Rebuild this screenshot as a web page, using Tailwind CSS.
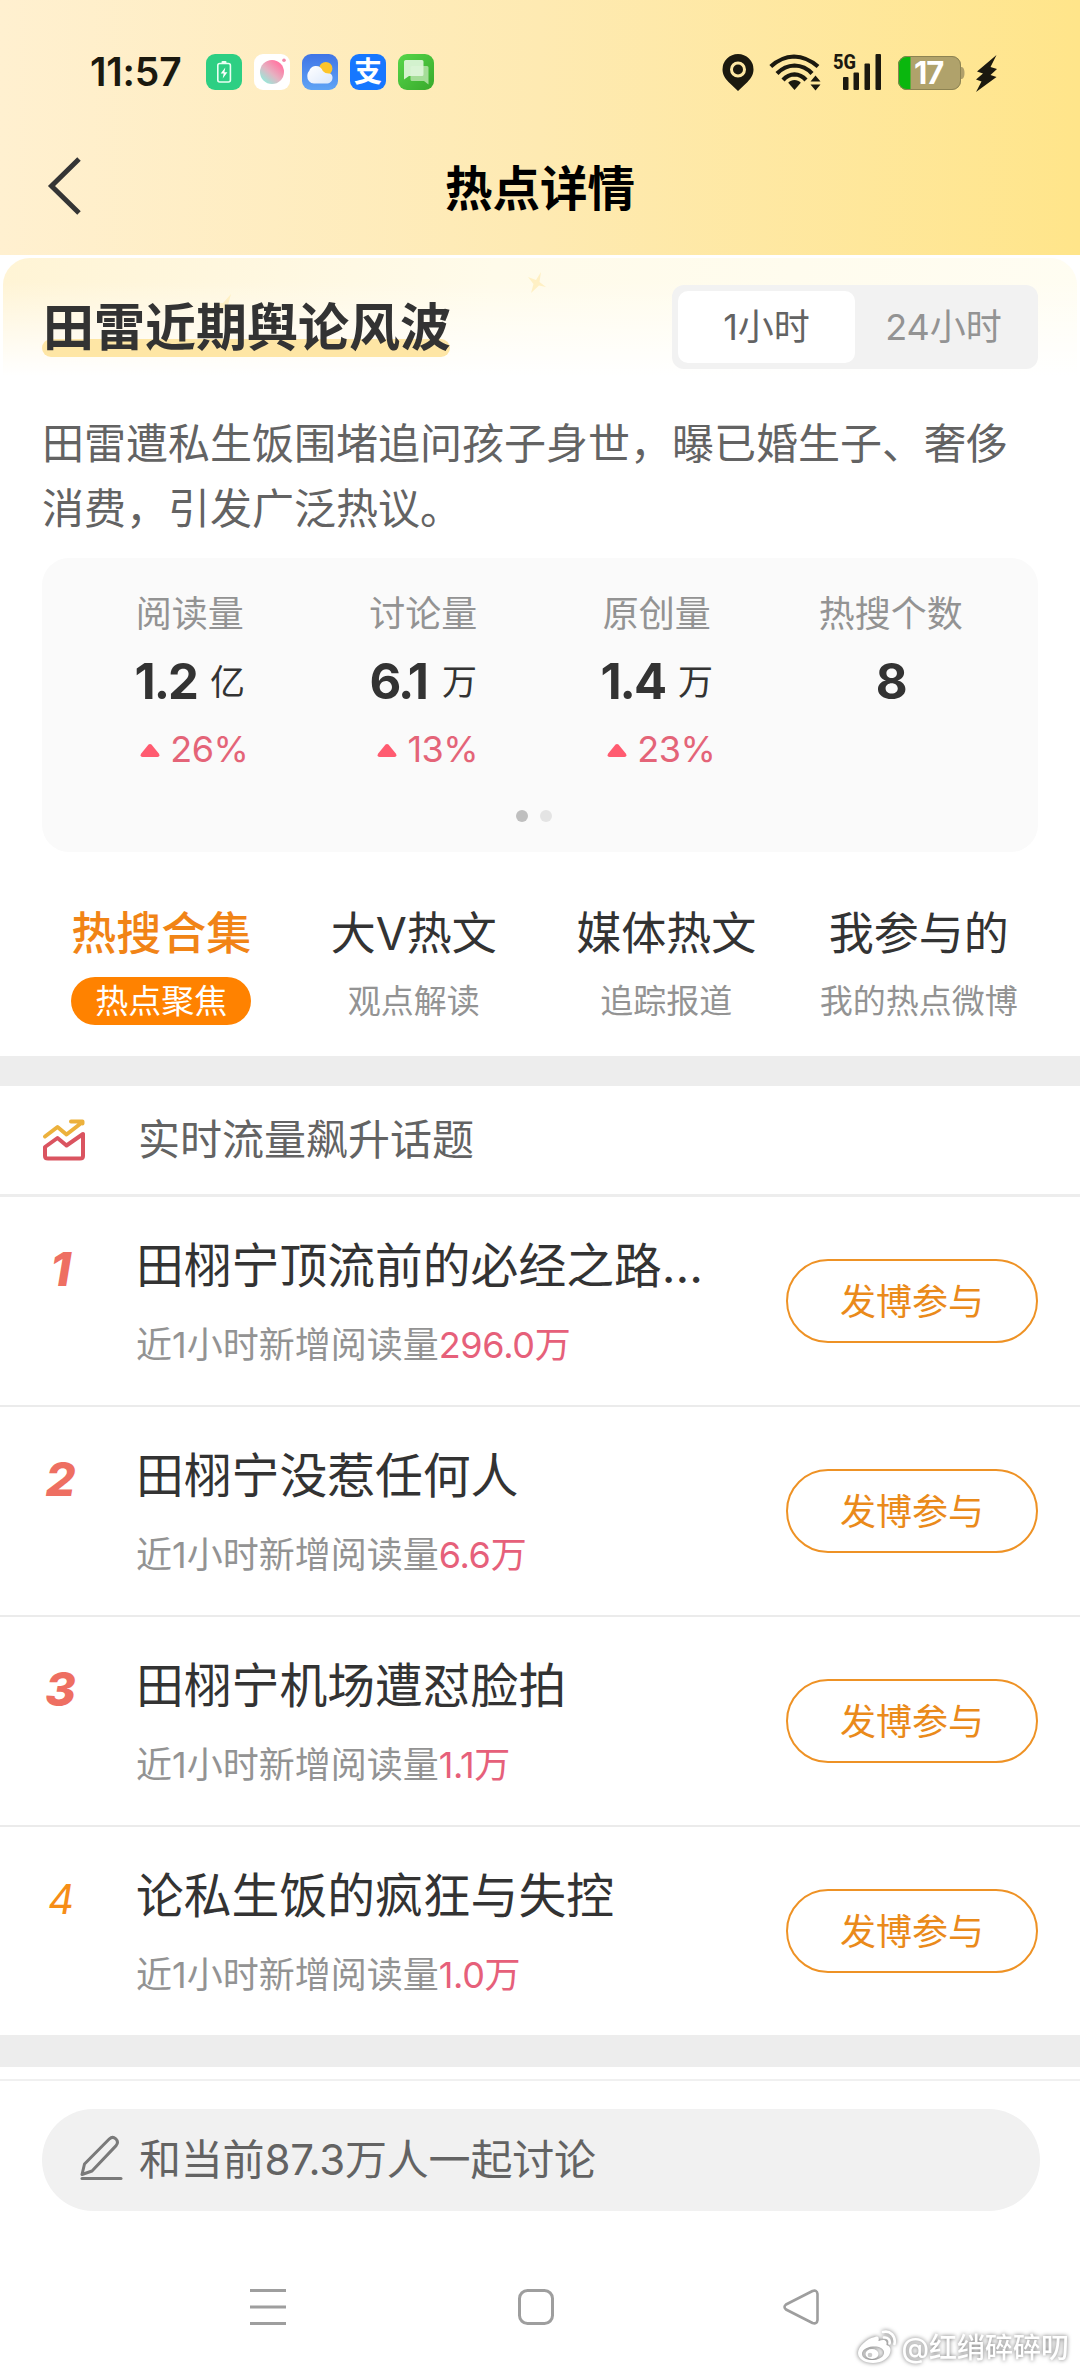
<!DOCTYPE html>
<html lang="zh-CN">
<head>
<meta charset="utf-8">
<meta name="viewport" content="width=1080">
<title>热点详情</title>
<script src="https://cdn.jsdelivr.net/npm/@tailwindcss/browser@4"></script>
</head>
<body class="bg-white">
<div class="relative w-[1080px] h-[2373px] overflow-hidden bg-white flex flex-col font-['Inter','Noto_Sans_CJK_SC',sans-serif] text-[#333]">

  <!-- Status bar and title bar -->
  <header class="h-[255px] shrink-0 bg-gradient-to-r from-[#fff0d0] via-[#feeab2] to-[#ffe58a]">
    <div class="h-[144px] flex items-center justify-between pl-[90px] pr-[83px]">
      <div class="flex items-center text-[#1b190f]">
        <span class="w-[116px] text-[39px] leading-[40px] font-semibold tracking-[-0.2px] whitespace-nowrap">11:57</span>
        <div class="flex gap-3">
          <svg class="size-9" viewBox="0 0 36 36"><rect width="36" height="36" rx="9" fill="#2dcf83"/><rect x="11.8" y="9.5" width="12.6" height="18.5" rx="2" fill="none" stroke="#e9fff3" stroke-width="1.6"/><rect x="15.5" y="7" width="5" height="2.4" rx="1" fill="#e9fff3"/><path d="M19.3 13.5l-4.6 6h3l-1 5 4.7-6.3h-3z" fill="#fff"/></svg>
          <svg class="size-9" viewBox="0 0 36 36"><defs><linearGradient id="ball" x1=".85" y1=".1" x2=".15" y2=".9"><stop offset=".1" stop-color="#ff7ba5"/><stop offset=".55" stop-color="#e5b3c2"/><stop offset="1" stop-color="#96e9da"/></linearGradient></defs><rect width="36" height="36" rx="9" fill="#fff"/><circle cx="18" cy="18" r="12" fill="url(#ball)"/><circle cx="30" cy="6.3" r="1.8" fill="#f38aa8"/></svg>
          <svg class="size-9" viewBox="0 0 36 36"><defs><linearGradient id="sky" x1="0" y1="0" x2="0" y2="1"><stop offset="0" stop-color="#3f74e6"/><stop offset="1" stop-color="#5fa4f5"/></linearGradient><linearGradient id="cloud" x1="0" y1="0" x2="1" y2="1"><stop offset="0" stop-color="#fff"/><stop offset="1" stop-color="#dbe8fb"/></linearGradient></defs><rect width="36" height="36" rx="9" fill="url(#sky)"/><circle cx="23.8" cy="14.5" r="6.6" fill="#fdc52b"/><path d="M12 29.5a7 7 0 0 1-6.7-7.5c0-2.500 1-4 2-5.200C8.500 13.200 11.500 12 14 12c3.500 0 5.800 2 6.800 5 1.700 1.800 3.800 2.600 6.200 2.500 2.500 0 3.500 1.700 3.500 4 0 4-3 6-6 6z" fill="url(#cloud)"/></svg>
          <div class="size-9 rounded-[9px] bg-[#1677ff] flex items-center justify-center text-white font-bold text-[28px] leading-9">支</div>
          <svg class="size-9" viewBox="0 0 36 36"><defs><linearGradient id="chat" x1="0" y1="0" x2="1" y2="1"><stop offset="0" stop-color="#56d64a"/><stop offset="1" stop-color="#38a92b"/></linearGradient></defs><rect width="36" height="36" rx="9" fill="url(#chat)"/><path d="M14 12h15a1.500 1.500 0 0 1 1.500 1.500V30.500L26 27H14a1.500 1.500 0 0 1-1.500-1.500v-12A1.500 1.500 0 0 1 14 12z" fill="#a5dd98"/><path d="M8 6h16a1.500 1.500 0 0 1 1.500 1.500v13A1.500 1.500 0 0 1 24 22H11l-5 3.500V7.500A1.800 1.800 0 0 1 8 6z" fill="#def5d9" fill-opacity=".93"/></svg>
        </div>
      </div>
      <div class="flex items-center text-[#1b190f]">
        <svg class="w-8 h-[38px]" viewBox="0 0 32 38"><path fill-rule="evenodd" fill="currentColor" d="M16 1a15.500 15.500 0 0 0-15.500 15.500c0 5 2.500 8.800 6 12.500L16 38l9.500-9c3.500-3.700 6-7.500 6-12.500A15.500 15.500 0 0 0 16 1zM16 8.500a8 8 0 1 1 0 16 8 8 0 0 1 0-16z"/><circle cx="16" cy="16.500" r="5" fill="currentColor"/></svg>
        <svg class="w-[52px] h-[38px] ml-[15px]" viewBox="0 0 52 38"><g fill="none" stroke="currentColor" stroke-width="4.200"><path d="M1.800 13.500Q12 4 25 3.500 38 4 49 13.500"/><path d="M8 20.500Q15.500 12.800 25.500 12.500 36 12.800 43 20.500"/><path d="M14 27Q19 21.600 25.500 21.400 32 21.600 37 27"/></g><path d="M25.500 27c2.500 0 4.600 1 6.300 2.800L25.500 37l-6.300-7.200C21 28 23 27 25.500 27z" fill="currentColor"/><path d="M46.500 22.500l5 6h-10zM46.500 37.500l5-6h-10z" fill="currentColor"/></svg>
        <svg class="w-[48px] h-[46px] -mt-2 ml-3 overflow-visible" viewBox="0 -8 48 46"><text x="0" y="15.500" font-family="Roboto" font-weight="800" font-size="20.500" textLength="23" lengthAdjust="spacingAndGlyphs" fill="currentColor">5G</text><g fill="currentColor"><rect x="10" y="24" width="5.500" height="13" rx="1"/><rect x="20.500" y="19.500" width="5.500" height="17.500" rx="1"/><rect x="31.500" y="10.500" width="5.500" height="26.500" rx="1"/><rect x="42.500" y="1" width="5.500" height="36" rx="1"/></g></svg>
        <div class="relative ml-[17px] mt-[2px] w-[67px] h-[34px]">
          <svg class="w-[67px] h-[34px]" viewBox="0 0 67 34"><defs><clipPath id="cell"><rect x="0" y="0" width="63" height="34" rx="9"/></clipPath></defs><path d="M62 11h2q2.500 1 2.500 6T64 23h-2z" fill="#b0a06a"/><g clip-path="url(#cell)"><rect width="63" height="34" fill="#b0a26b"/><rect width="12.500" height="34" fill="#0ab70e"/></g><rect x=".5" y=".5" width="62" height="33" rx="8.500" fill="none" stroke="#8d8352"/></svg>
          <span class="absolute inset-0 pl-[16px] leading-[34px] text-[31px] font-bold text-white tracking-[-1px]">17</span>
        </div>
        <svg class="w-[21px] h-[37px] ml-[11px] mt-[2px]" viewBox="0 0 21 37"><path fill="currentColor" d="M20.500 0L1 16.500l6 2L0 24.500l5.500 2L0 37l20.500-15-6-2L21 14l-6.500-2z"/></svg>
      </div>
    </div>
    <div class="h-[86px] grid grid-cols-[200px_1fr_200px] items-center">
      <svg class="ml-[47px] -mt-[5px] w-9 h-[58px]" viewBox="0 0 36 58"><path d="M32 2L4.500 29 32 56" fill="none" stroke="#353535" stroke-width="5"/></svg>
      <h1 class="pt-[2px] text-center text-[47.5px] leading-[86px] font-bold text-black">热点详情</h1>
    </div>
  </header>

  <!-- Topic summary -->
  <section class="relative h-[303px] shrink-0">
    <div class="absolute inset-x-[3px] top-[3px] h-[118px] rounded-t-[27px] bg-[linear-gradient(180deg,#ffffff00_20%,#ffffff_100%),linear-gradient(100deg,#fff4d5_0%,#fffbea_45%,#fffdf2_100%)]"></div>
    <svg class="absolute left-[527px] top-[16px] w-5 h-6" viewBox="0 0 20 24"><path d="M14 1l-1.500 10L19 16l-7-1.500L4 22l2.500-9L1 6l8 3z" fill="#fff0c4"/></svg>
    <svg class="absolute left-[213px] top-[38px] w-5 h-6" viewBox="0 0 20 24"><path d="M18 1l-3 11L19 20l-9-4L1 10l9 0z" fill="#fff0c4"/></svg>
    <div class="relative flex justify-between items-start pt-[30px] pl-[42px] pr-[42px]">
      <div class="relative h-[72px]">
        <div class="absolute inset-x-0 bottom-0 h-[18px] rounded-full bg-[#fee6a5]"></div>
        <h2 class="relative pt-[8px] pl-px w-[408px] text-[51px] leading-[70px] font-bold whitespace-nowrap">田雷近期舆论风波</h2>
      </div>
      <div class="flex w-[366px] h-[84px] p-1.5 rounded-xl bg-[#f2f2f2] text-[36px] leading-[72px] text-center">
        <div class="w-[177px] rounded-[10px] bg-white text-[#636363]">1小时</div>
        <div class="w-[177px] text-[#939393]">24小时</div>
      </div>
    </div>
    <p class="relative mt-[42px] px-[42px] text-[42px] leading-[65px] text-[#636363]">田雷遭私生饭围堵追问孩子身世，曝已婚生子、奢侈<br>消费，引发广泛热议。</p>
  </section>

  <!-- Statistics -->
  <section class="mx-[42px] w-[996px] h-[294px] shrink-0 rounded-[27px] bg-[#fafafa] flex flex-col px-[31px]">
    <div class="grid grid-cols-4 h-[252px] text-center pt-[31px]">
      <div>
        <div class="text-[36px] leading-[50px] text-[#939393]">阅读量</div>
        <div class="mt-[13px] flex items-center justify-center gap-[13px] leading-[60px]"><b class="text-[49px] tracking-[-2px]">1.2</b><span class="-mt-px text-[35px]">亿</span></div>
        <div class="mt-[13px] pl-[9px] flex items-center justify-center gap-2.5 text-[36px] leading-[48px] tracking-[-0.5px] text-[#e46478]"><svg class="w-5 h-[15px] mt-0.5" viewBox="0 0 20 15"><path d="M8.300 1.800q1.700-1.600 3.400 0l7.300 9q1.400 3-1.500 3.200h-15Q-.4 13.800 1 10.800z" fill="#ff5b70"/></svg>26%</div>
      </div>
      <div>
        <div class="text-[36px] leading-[50px] text-[#939393]">讨论量</div>
        <div class="mt-[13px] flex items-center justify-center gap-[15px] leading-[60px]"><b class="text-[49px] tracking-[-2px]">6.1</b><span class="-mt-px text-[35px]">万</span></div>
        <div class="mt-[13px] pl-[9px] flex items-center justify-center gap-2.5 text-[36px] leading-[48px] tracking-[-0.5px] text-[#e46478]"><svg class="w-5 h-[15px] mt-0.5" viewBox="0 0 20 15"><path d="M8.300 1.800q1.700-1.600 3.400 0l7.300 9q1.400 3-1.500 3.200h-15Q-.4 13.800 1 10.800z" fill="#ff5b70"/></svg>13%</div>
      </div>
      <div>
        <div class="text-[36px] leading-[50px] text-[#939393]">原创量</div>
        <div class="mt-[13px] flex items-center justify-center gap-[13px] leading-[60px]"><b class="text-[49px] tracking-[-2px]">1.4</b><span class="-mt-px text-[35px]">万</span></div>
        <div class="mt-[13px] pl-[9px] flex items-center justify-center gap-2.5 text-[36px] leading-[48px] tracking-[-0.5px] text-[#e46478]"><svg class="w-5 h-[15px] mt-0.5" viewBox="0 0 20 15"><path d="M8.300 1.800q1.700-1.600 3.400 0l7.300 9q1.400 3-1.500 3.200h-15Q-.4 13.800 1 10.800z" fill="#ff5b70"/></svg>23%</div>
      </div>
      <div>
        <div class="pl-px text-[36px] leading-[50px] text-[#939393]">热搜个数</div>
        <div class="pl-[3px] mt-[13px] leading-[60px]"><b class="text-[49px]">8</b></div>
      </div>
    </div>
    <div class="flex justify-center gap-3 pr-[12px]"><i class="size-3 rounded-full bg-[#bfbfbf]"></i><i class="size-3 rounded-full bg-[#e4e4e4]"></i></div>
  </section>

  <!-- Tabs -->
  <nav class="h-[204px] shrink-0 grid grid-cols-4 px-[35px] pt-[52px] text-center">
    <div class="flex flex-col items-center"><div class="text-[45px] leading-[60px] font-medium text-[#f18416]">热搜合集</div><div class="mt-[13px] w-[180px] h-12 rounded-full bg-[#ff8200] text-white text-[33px] leading-[48px]">热点聚焦</div></div>
    <div class="flex flex-col items-center"><div class="text-[45px] leading-[60px]">大V热文</div><div class="mt-[13px] text-[33px] leading-[48px] text-[#939393]">观点解读</div></div>
    <div class="flex flex-col items-center"><div class="text-[45px] leading-[60px]">媒体热文</div><div class="mt-[13px] text-[33px] leading-[48px] text-[#939393]">追踪报道</div></div>
    <div class="flex flex-col items-center"><div class="text-[45px] leading-[60px]">我参与的</div><div class="mt-[13px] text-[33px] leading-[48px] text-[#939393]">我的热点微博</div></div>
  </nav>
  <div class="h-[30px] shrink-0 bg-[#ededed]"></div>

  <!-- Rising topics -->
  <div class="h-[111px] shrink-0 flex items-center border-b-[3px] border-[#ededed] pl-[42px]">
    <svg class="w-11 h-[42px]" viewBox="0 0 44 42" fill="none" stroke-width="4" stroke-linejoin="round" stroke-linecap="round"><path d="M3 17.500L15.500 8l9 7.500L40 3.500M29 2.500h11.500v2" stroke="#ecb13c"/><path d="M3 28L15.500 19l9 7.500L41 15v22q0 2.500-3 2.500H6q-3 0-3-2.500z" stroke="#da5460"/></svg>
    <h3 class="ml-[52px] text-[42px] leading-[60px] text-[#636363]">实时流量飙升话题</h3>
  </div>

  <article class="h-[210px] shrink-0 border-b-2 border-[#ebebeb] flex items-start pr-[42px]">
    <span class="w-[121px] text-center mt-[44px] text-[47px] leading-[56px] font-extrabold italic text-[#ee6f62]">1</span>
    <div class="flex-1 pl-[15px] pt-[39px]"><h4 class="text-[47.8px] leading-[60px] whitespace-nowrap">田栩宁顶流前的必经之路...</h4><p class="mt-[24px] text-[36px] leading-[50px] text-[#939393] whitespace-nowrap">近1小时新增阅读量<span class="text-[#e6607a] tracking-[-0.3px]">296.0万</span></p></div>
    <button class="mt-[62px] pt-px w-[252px] h-[84px] rounded-full border-2 border-[#ee9225] text-[36px] text-[#ea8a1a]">发博参与</button>
  </article>
  <article class="h-[210px] shrink-0 border-b-2 border-[#ebebeb] flex items-start pr-[42px]">
    <span class="w-[121px] text-center mt-[44px] text-[47px] leading-[56px] font-extrabold italic text-[#ee6f62]">2</span>
    <div class="flex-1 pl-[15px] pt-[39px]"><h4 class="text-[47.8px] leading-[60px] whitespace-nowrap">田栩宁没惹任何人</h4><p class="mt-[24px] text-[36px] leading-[50px] text-[#939393] whitespace-nowrap">近1小时新增阅读量<span class="text-[#e6607a] tracking-[-0.3px]">6.6万</span></p></div>
    <button class="mt-[62px] pt-px w-[252px] h-[84px] rounded-full border-2 border-[#ee9225] text-[36px] text-[#ea8a1a]">发博参与</button>
  </article>
  <article class="h-[210px] shrink-0 border-b-2 border-[#ebebeb] flex items-start pr-[42px]">
    <span class="w-[121px] text-center mt-[44px] text-[47px] leading-[56px] font-extrabold italic text-[#ee6f62]">3</span>
    <div class="flex-1 pl-[15px] pt-[39px]"><h4 class="text-[47.8px] leading-[60px] whitespace-nowrap">田栩宁机场遭怼脸拍</h4><p class="mt-[24px] text-[36px] leading-[50px] text-[#939393] whitespace-nowrap">近1小时新增阅读量<span class="text-[#e6607a] tracking-[-0.3px]">1.1万</span></p></div>
    <button class="mt-[62px] pt-px w-[252px] h-[84px] rounded-full border-2 border-[#ee9225] text-[36px] text-[#ea8a1a]">发博参与</button>
  </article>
  <article class="h-[208px] shrink-0 flex items-start pr-[42px]">
    <span class="w-[122px] text-center mt-[44px] text-[41px] leading-[56px] italic text-[#f68d17]">4</span>
    <div class="flex-1 pl-[14px] pt-[39px]"><h4 class="text-[47.8px] leading-[60px] whitespace-nowrap">论私生饭的疯狂与失控</h4><p class="mt-[24px] text-[36px] leading-[50px] text-[#939393] whitespace-nowrap">近1小时新增阅读量<span class="text-[#e6607a] tracking-[-0.3px]">1.0万</span></p></div>
    <button class="mt-[62px] pt-px w-[252px] h-[84px] rounded-full border-2 border-[#ee9225] text-[36px] text-[#ea8a1a]">发博参与</button>
  </article>
  <div class="h-8 shrink-0 bg-[#ededed]"></div>

  <!-- Comment box -->
  <footer class="mt-3 shrink-0 border-t-2 border-[#f0f0f0] pt-7 pl-[42px] pr-10">
    <div class="h-[102px] rounded-full bg-[#f1f1f1] flex items-center pl-[37px]">
      <svg class="w-11 h-[46px] -mt-1" viewBox="0 0 44 46" fill="none" stroke="#7a7a7a" stroke-width="3" stroke-linecap="round" stroke-linejoin="round"><path d="M3 39.500L5.500 29 30.500 3.800q3-2.800 6.300 0 3.200 3.200.3 6.800L13 36z"/><path d="M3 43.500h39"/></svg>
      <span class="ml-4 text-[42px] leading-[60px] tracking-[-0.2px] text-[#636363]">和当前87.3万人一起讨论</span>
    </div>
  </footer>

  <!-- System navigation -->
  <div class="mt-[76px] h-10 shrink-0 flex items-center pl-[248px] text-[#9e9e9e]">
    <svg class="size-10" viewBox="0 0 40 40" fill="none" stroke="currentColor" stroke-width="3"><path d="M2 3.500h36M2 20h36M2 36.500h36"/></svg>
    <svg class="size-10 ml-[228px]" viewBox="0 0 40 40" fill="none" stroke="currentColor" stroke-width="3"><rect x="3.500" y="3.500" width="33" height="33" rx="8"/></svg>
    <svg class="size-10 ml-[226px]" viewBox="0 0 40 40" fill="none" stroke="currentColor" stroke-width="2.600" stroke-linejoin="round"><path d="M4 17.500L30.500 4q4.500-1.500 5 3v26q-.5 4.500-5 3L4 22.500q-3-2.500 0-5z"/></svg>
  </div>

  <!-- Watermark -->
  <div class="absolute right-[11px] bottom-[6px] flex items-center gap-1 drop-shadow-[0_0_2px_#00000090] text-white">
    <svg class="w-10 h-[36px]" viewBox="0 0 40 36"><path fill-rule="evenodd" fill="currentColor" d="M18 7c3-1.500 4.500.5 3.500 4 5-2 9-1.500 8 4 3.500 1 5 4 3.500 8-2 6-9 10-17 10S1 29 1 23C1 17 10 8 18 7zM15.500 16.500C9 17 4.500 20.500 5 24.500s6 6 12 5.500 10.500-4 10-8-5.500-6-11.500-5.500z"/><ellipse cx="15" cy="24" rx="6.500" ry="5" fill="currentColor"/><circle cx="13" cy="25" r="2.300" fill="#ccc"/><path d="M26 2c7-2 13 4 11.500 12M27 7.500c3.500-.5 6.500 2 5.500 6" fill="none" stroke="currentColor" stroke-width="2.600" stroke-linecap="round"/></svg>
    <span class="text-[28px] leading-[38px] font-medium whitespace-nowrap">@红绡碎碎叨</span>
  </div>
</div>
</body>
</html>
